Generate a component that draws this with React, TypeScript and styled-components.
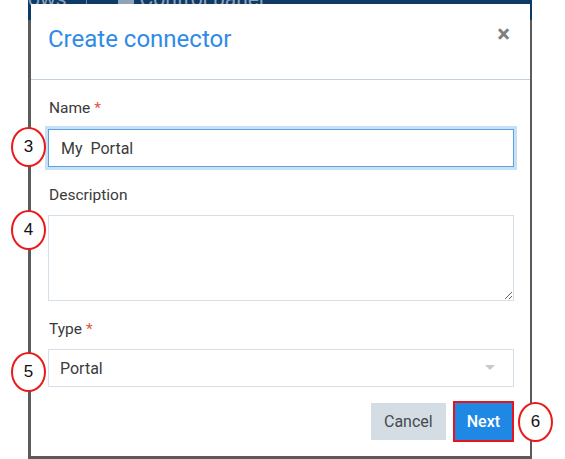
import styled, { createGlobalStyle } from "styled-components";

const GlobalStyle = createGlobalStyle`
  html, body {
    margin: 0;
    padding: 0;
    background: #ffffff;
  }
  body {
    font-family: Roboto, "Liberation Sans", Arial, sans-serif;
  }
`;

const Stage = styled.div`
  position: relative;
  width: 565px;
  height: 459px;
  overflow: hidden;
  background: #ffffff;
`;

const Backdrop = styled.div`
  position: relative;
  margin-left: 28px;
  width: 504px;
  height: 459px;
  background: #5b5b5b;
`;

const AppBar = styled.div`
  height: 20px;
  background: #0e3a66;
  overflow: hidden;
  display: flex;
  align-items: flex-end;
  color: #8ea3b9;
  font-size: 21px;
  line-height: 22px;
`;

const AppBarText = styled.span<{ $gap?: number }>`
  display: block;
  margin-bottom: 10px;
  margin-left: ${(p) => p.$gap ?? 0}px;
  white-space: nowrap;
`;

const AppBarDivider = styled.span`
  width: 1px;
  height: 20px;
  background: #6f86a0;
  margin-left: 19px;
`;

const Modal = styled.div`
  position: absolute;
  top: 4px;
  left: 3px;
  right: 2px;
  background: #ffffff;
  display: flex;
  flex-direction: column;
`;

const Header = styled.div`
  height: 76px;
  display: flex;
  justify-content: space-between;
  align-items: flex-start;
  padding: 19px 17px 0 17px;
  box-sizing: border-box;
  border-bottom: 1px solid #c3d1dc;
`;

const Title = styled.h2`
  margin: 0;
  font-size: 24px;
  line-height: 32px;
  font-weight: 400;
  color: #2f8be6;
`;

const Close = styled.span`
  font-size: 24px;
  line-height: 20px;
  font-weight: 700;
  color: #7f7f7f;
  margin-top: 1px;
  margin-right: 3px;
`;

const Body = styled.div`
  display: flex;
  flex-direction: column;
  gap: 17px;
  padding: 17px 16px 16px 17px;
`;

const Field = styled.div`
  display: flex;
  flex-direction: column;
  gap: 10px;
`;

const Label = styled.label`
  font-size: 15.5px;
  line-height: 20px;
  padding-top: 1px;
  color: #3a3a3a;
  padding-left: 1px;
`;

const Required = styled.span`
  color: #e4533f;
  margin-left: 4px;
`;

const TextInput = styled.input`
  box-sizing: border-box;
  width: 100%;
  height: 38px;
  margin-top: 1px;
  padding: 0 12px;
  border: 1px solid #5aa2e4;
  box-shadow: 0 0 0 3px #c7e0f6;
  outline: none;
  font-family: Roboto, "Liberation Sans", Arial, sans-serif;
  font-size: 16px;
  color: #3b3b3b;
  caret-color: #222;
`;

const TextArea = styled.textarea`
  box-sizing: border-box;
  width: 100%;
  height: 86px;
  padding: 8px 12px;
  border: 1px solid #d6dfe7;
  outline: none;
  font-family: Roboto, "Liberation Sans", Arial, sans-serif;
  font-size: 16px;
  color: #3b3b3b;
  resize: vertical;
  display: block;
`;

const SelectBox = styled.div`
  box-sizing: border-box;
  width: 100%;
  height: 38px;
  padding: 0 18px 0 11px;
  border: 1px solid #d6dfe7;
  display: flex;
  align-items: center;
  justify-content: space-between;
  font-size: 16px;
  color: #3b3b3b;
`;

const Footer = styled.div`
  display: flex;
  justify-content: flex-end;
  gap: 9px;
  margin-top: -1px;
  padding-right: 2px;
`;

const Button = styled.button<{ $primary?: boolean }>`
  height: 37px;
  padding: 0 ${(p) => (p.$primary ? "12px" : "13px")};
  border: none;
  font-family: Roboto, "Liberation Sans", Arial, sans-serif;
  font-size: 16px;
  font-weight: ${(p) => (p.$primary ? 500 : 400)};
  background: ${(p) => (p.$primary ? "#1f88e5" : "#d5dde4")};
  color: ${(p) => (p.$primary ? "#ffffff" : "#444a50")};
  outline: ${(p) => (p.$primary ? "2px solid #e8141b" : "none")};
  cursor: pointer;
`;

const Marker = styled.div<{ $x: number; $y: number }>`
  position: absolute;
  left: ${(p) => p.$x}px;
  top: ${(p) => p.$y}px;
  width: 35px;
  height: 40px;
  box-sizing: border-box;
  border: 2px solid #ea1a1a;
  border-radius: 50%;
  background: #ffffff;
  display: flex;
  align-items: center;
  justify-content: center;
  font-family: "Liberation Sans", Arial, sans-serif;
  font-size: 17px;
  color: #111;
`;

const Caret = () => (
  <svg width="10" height="6" viewBox="0 0 10 6">
    <path d="M0 0 L10 0 L5 5 Z" fill="#c4cad0" />
  </svg>
);

const PanelIcon = () => (
  <svg width="16" height="16" viewBox="0 0 16 16" style={{ marginBottom: 6, marginLeft: 31 }}>
    <rect x="0" y="0" width="16" height="16" fill="#8ea3b9" />
  </svg>
);

export default function App() {
  return (
    <>
      <GlobalStyle />
      <Stage>
        <Backdrop>
          <AppBar>
            <AppBarText>ows</AppBarText>
            <AppBarDivider />
            <PanelIcon />
            <AppBarText $gap={6}>Control panel</AppBarText>
          </AppBar>
          <Modal>
            <Header>
              <Title>Create connector</Title>
              <Close>×</Close>
            </Header>
            <Body>
              <Field>
                <Label>
                  Name<Required>*</Required>
                </Label>
                <TextInput defaultValue="My  Portal" autoFocus />
              </Field>
              <Field>
                <Label>Description</Label>
                <TextArea />
              </Field>
              <Field>
                <Label>
                  Type<Required>*</Required>
                </Label>
                <SelectBox>
                  <span>Portal</span>
                  <Caret />
                </SelectBox>
              </Field>
              <Footer>
                <Button>Cancel</Button>
                <Button $primary>Next</Button>
              </Footer>
            </Body>
          </Modal>
        </Backdrop>
        <Marker $x={11} $y={127}>3</Marker>
        <Marker $x={11} $y={210}>4</Marker>
        <Marker $x={11} $y={352}>5</Marker>
        <Marker $x={518} $y={402}>6</Marker>
      </Stage>
    </>
  );
}
